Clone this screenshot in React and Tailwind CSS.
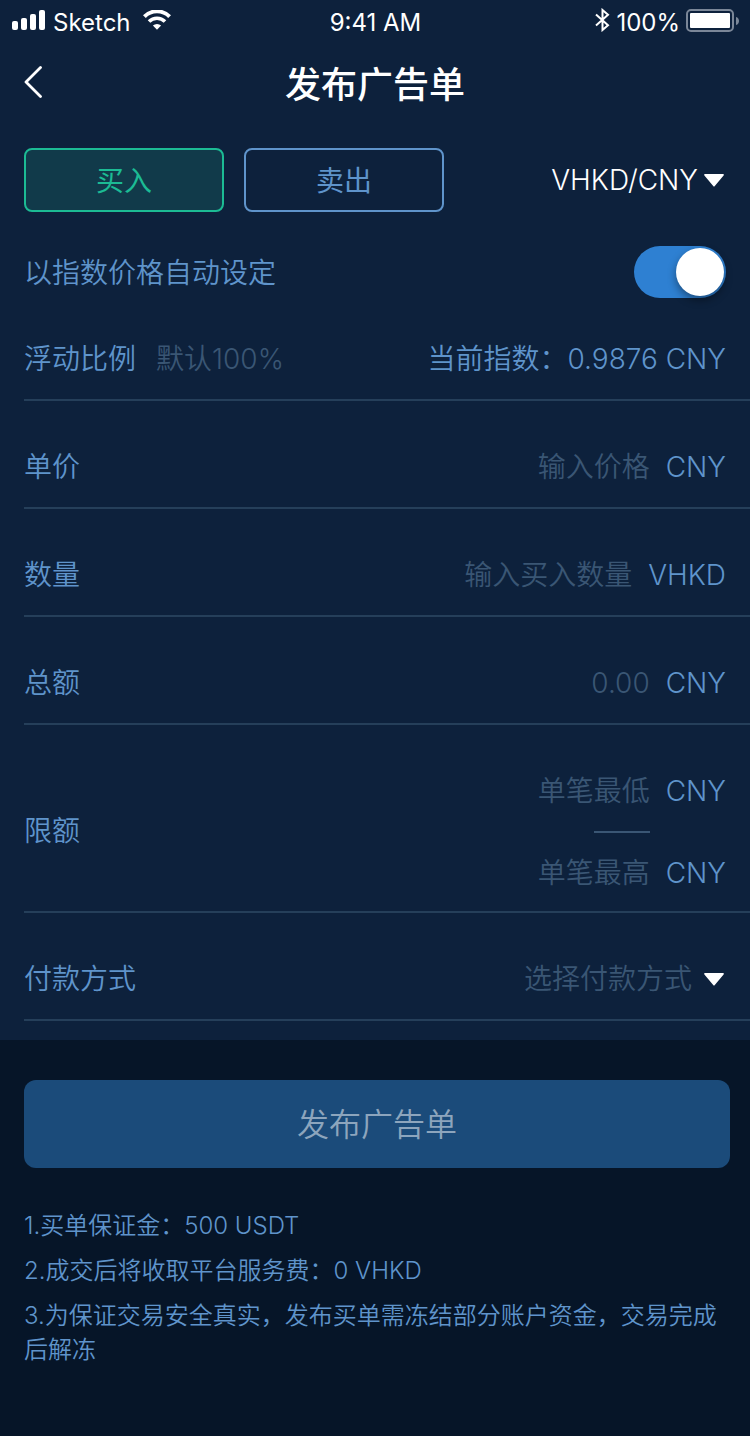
import { useState } from 'react';

function SignalIcon() {
  return (
    <svg width="33" height="20" viewBox="0 0 33 20" fill="currentColor" aria-hidden="true">
      <rect x="0" y="11" width="6" height="9" rx="2" />
      <rect x="9" y="8" width="6" height="12" rx="2" />
      <rect x="18" y="4" width="6" height="16" rx="2" />
      <rect x="27" y="0" width="6" height="20" rx="2" />
    </svg>
  );
}

function WifiIcon() {
  return (
    <svg width="28" height="20" viewBox="0 0 28 20" fill="none" stroke="currentColor" aria-hidden="true">
      <path d="M1.4 6.6a17.8 17.8 0 0 1 25.2 0" strokeWidth="4" />
      <path d="M6 11.6a11.3 11.3 0 0 1 16 0" strokeWidth="3.6" />
      <path d="M9.9 15.6a5.8 5.8 0 0 1 8.2 0L14 19.8z" fill="currentColor" stroke="none" />
    </svg>
  );
}

function BluetoothIcon() {
  return (
    <svg width="15" height="24" viewBox="0 0 15 24" fill="none" stroke="currentColor" strokeWidth="2" aria-hidden="true">
      <path d="M1 6.5 13 17.3 7.5 22V2L13 6.7 1 17.5" />
    </svg>
  );
}

function BatteryIcon() {
  return (
    <svg width="53" height="24" viewBox="0 0 53 24" aria-hidden="true">
      <rect x="1" y="2" width="46" height="21" rx="4" fill="none" stroke="#7b8798" strokeWidth="2" />
      <rect x="4" y="5" width="40" height="15" rx="1" fill="#fff" />
      <path d="M50 9c4 1 4 7 0 8z" fill="#7b8798" />
    </svg>
  );
}

function Caret() {
  return (
    <svg className="pointer-events-none mr-0.5" width="20" height="13" viewBox="0 0 20 13" fill="#fff" aria-hidden="true">
      <path d="M1 0H19Q20.4 0.4 19.6 1.6L10.8 12Q10 13 9.2 12L0.4 1.6Q-0.4 0.4 1 0z" />
    </svg>
  );
}

const inputStyle = 'min-w-0 bg-transparent outline-none placeholder:text-[#3a5674] placeholder:opacity-100';

function Row({ children }) {
  return (
    <div className="mt-6 flex min-h-[84px] items-center border-b-2 border-[#253f5a] pt-0.5 pr-6">{children}</div>
  );
}

function AmountRow({ id, label, placeholder, unit }) {
  return (
    <Row>
      <label htmlFor={id}>{label}</label>
      <input id={id} inputMode="decimal" placeholder={placeholder} className={`${inputStyle} mr-4 flex-1 text-right`} />
      <span>{unit}</span>
    </Row>
  );
}

export default function App() {
  const [side, setSide] = useState('buy');
  const [auto, setAuto] = useState(true);
  const active = 'border-[#1cbb94] bg-[#113a4a] text-[#1cbb94]';
  const idle = 'border-[#5f94cb] text-[#5f94cb]';

  return (
    <div className="flex min-h-screen flex-col bg-[#061528] font-['Inter','Noto_Sans_CJK_SC',sans-serif] text-[28px] leading-10 font-[350] text-[#5f94cb]">
      <div className="bg-[#0d213c] pb-[19px]">
        <div className="grid h-10 grid-cols-3 items-center pr-[11px] pl-3 text-2xl leading-8 font-normal text-white">
          <div className="flex items-center gap-2">
            <SignalIcon />
            <span className="pt-1.5">Sketch</span>
            <span className="ml-1">
              <WifiIcon />
            </span>
          </div>
          <div className="pt-1.5 text-center">9:41 AM</div>
          <div className="flex items-center justify-end gap-1.5">
            <BluetoothIcon />
            <span className="pt-1.5">100%</span>
            <BatteryIcon />
          </div>
        </div>

        <header className="grid h-[88px] grid-cols-[48px_1fr_48px] items-center px-3 text-white">
          <button type="button" aria-label="返回" className="flex h-12 items-center pb-1 pl-3">
            <svg width="18" height="32" viewBox="0 0 18 32" fill="none" stroke="currentColor" strokeWidth="2.8" strokeLinecap="round" strokeLinejoin="round" aria-hidden="true">
              <path d="M16.5 1.5 2 16l14.5 14.5" />
            </svg>
          </button>
          <h1 className="pt-0.5 text-center text-4xl font-medium">发布广告单</h1>
        </header>

        <main className="pl-6">
          <div className="mt-5 flex items-center gap-5 pr-6">
            <button type="button" aria-pressed={side === 'buy'} onClick={() => setSide('buy')} className={`h-16 w-[200px] rounded-lg border-2 pt-0.5 font-normal ${side === 'buy' ? active : idle}`}>
              买入
            </button>
            <button type="button" aria-pressed={side === 'sell'} onClick={() => setSide('sell')} className={`h-16 w-[200px] rounded-lg border-2 pt-0.5 font-normal ${side === 'sell' ? active : idle}`}>
              卖出
            </button>
            <label className="ml-auto flex items-center gap-1.5 text-white">
              <select aria-label="交易对" className="field-sizing-content appearance-none bg-transparent outline-none">
                <option>VHKD/CNY</option>
              </select>
              <Caret />
            </label>
          </div>

          <div className="mt-[15px] flex h-[90px] items-center justify-between pr-6">
            <label htmlFor="auto" className="pt-0.5">以指数价格自动设定</label>
            <input
              id="auto"
              type="checkbox"
              role="switch"
              checked={auto}
              onChange={(e) => setAuto(e.target.checked)}
              className="flex h-[52px] w-[92px] appearance-none items-center rounded-full bg-[#253f5a] p-0.5 before:size-12 before:rounded-full before:bg-white before:shadow-[0_4px_8px_rgba(0,0,0,0.4)] checked:justify-end checked:bg-[#2e80d2]"
            />
          </div>

          <div className="flex h-[84px] items-center border-b-2 border-[#253f5a] pt-0.5 pr-6">
            <label htmlFor="ratio">浮动比例</label>
            <input id="ratio" placeholder="默认100%" className={`${inputStyle} ml-5 flex-1`} />
            <span>当前指数：0.9876 CNY</span>
          </div>

          <AmountRow id="price" label="单价" placeholder="输入价格" unit="CNY" />
          <AmountRow id="amount" label="数量" placeholder="输入买入数量" unit="VHKD" />
          <AmountRow id="total" label="总额" placeholder="0.00" unit="CNY" />

          <Row>
            <label htmlFor="min">限额</label>
            <div className="grid flex-1 grid-cols-[1fr_auto] gap-x-4 gap-y-5 pt-5 pb-[18px]">
              <input id="min" inputMode="decimal" placeholder="单笔最低" className={`${inputStyle} text-right`} />
              <span>CNY</span>
              <div className="col-start-1 h-0.5 w-14 justify-self-end bg-[#3a5674]" />
              <input aria-label="单笔最高" inputMode="decimal" placeholder="单笔最高" className={`${inputStyle} col-start-1 text-right`} />
              <span>CNY</span>
            </div>
          </Row>

          <Row>
            <label htmlFor="pay">付款方式</label>
            <div className="ml-auto flex items-center gap-3">
              <select id="pay" className="field-sizing-content appearance-none bg-transparent text-[#3a5674] outline-none">
                <option>选择付款方式</option>
              </select>
              <Caret />
            </div>
          </Row>
        </main>
      </div>

      <footer className="pt-10 pr-5 pl-6">
        <button type="button" className="h-[88px] w-full rounded-xl bg-[#1b4b7a] pt-0.5 text-[32px] text-[#8da5bd]">
          发布广告单
        </button>
        <div className="mt-[41px] flex flex-col gap-[11px] text-2xl leading-[34px]">
          <p>1.买单保证金：500 USDT</p>
          <p>2.成交后将收取平台服务费：0 VHKD</p>
          <p>3.为保证交易安全真实，发布买单需冻结部分账户资金，交易完成后解冻</p>
        </div>
      </footer>
    </div>
  );
}
